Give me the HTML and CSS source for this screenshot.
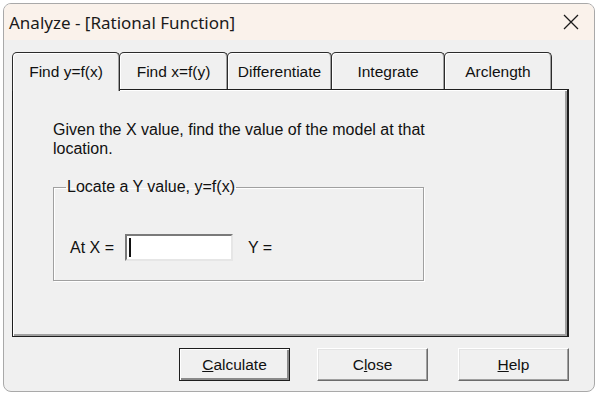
FILE: index.html
```html
<!DOCTYPE html>
<html lang="en">
  <head>
    <meta charset="UTF-8" />
    <title>Analyze - [Rational Function]</title>
    <link rel="stylesheet" href="styles.css">
  </head>
  <body>
    <div class="window">
      <div class="titlebar">
        <span class="title">Analyze - [Rational Function]</span>
        <svg class="close" width="16" height="16" viewBox="0 0 16 16">
          <path d="M1 1 L15 15 M15 1 L1 15" stroke="#1a1a1a" stroke-width="1.3" fill="none" />
        </svg>
      </div>

      <div class="content">
        <div class="tabs">
          <div class="tab active" style="width: 108px">Find y=f(x)</div>
          <div class="tab" style="width: 109px">Find x=f(y)</div>
          <div class="tab" style="width: 105px">Differentiate</div>
          <div class="tab" style="width: 114px">Integrate</div>
          <div class="tab" style="width: 108px">Arclength</div>
        </div>

        <div class="panel">
          <p class="desc">Given the X value, find the value of the model at that<br>location.</p>

          <fieldset class="group">
            <legend>Locate a Y value, y=f(x)</legend>
            <div class="row">
              <span class="label">At X =</span>
              <div class="input"><span class="caret"></span></div>
              <span class="label">Y =</span>
            </div>
          </fieldset>
        </div>

        <div class="buttons">
          <button class="btn default"><u>C</u>alculate</button>
          <button class="btn close-btn">C<u>l</u>ose</button>
          <button class="btn help-btn"><u>H</u>elp</button>
        </div>
      </div>
    </div>
  </body>
</html>
```

FILE: styles.css
```css
body{
  margin: 0;
  background: #ffffff;
  font-family: "Liberation Sans", Arial, sans-serif;
}
.window{
  margin: 3px 0 0 3px;
  width: 592px;
  height: 389px;
  box-sizing: border-box;
  border: 1px solid #a9a9a9;
  border-radius: 8px;
  background: #f0f0f0;
  overflow: hidden;
}
.titlebar{
  height: 36px;
  background: #faf2eb;
  display: flex;
  align-items: center;
  justify-content: space-between;
  padding: 0 15px 0 5px;
}
.title{
  font-family: "Noto Sans", sans-serif;
  font-size: 17px;
  color: #1a1a1a;
}
.close{
  display: block;
}
.content{
  padding: 12px 0 0 8px;
}
.tabs{
  display: flex;
  height: 37px;
}
.tab{
  box-sizing: border-box;
  height: 37px;
  margin-right: -1px;
  border: 1px solid #2b2b2b;
  border-bottom: none;
  border-radius: 5px 5px 0 0;
  box-shadow: inset 1px 1px #ffffff, inset -1px 0 #a0a0a0;
  background: #f0f0f0;
  font-size: 15.5px;
  color: #111;
  text-align: center;
  line-height: 37px;
}
.tab.active{
  position: relative;
  z-index: 1;
  height: 39px;
  margin-bottom: -2px;
}
.panel{
  box-sizing: border-box;
  width: 557px;
  height: 248px;
  border: 1px solid #1e1e1e;
  border-right: 2px solid #1e1e1e;
  box-shadow: inset 1px 1px #ffffff, inset -2px -2px #a0a0a0;
  padding: 30px 0 0 40px;
}
.desc{
  margin: 0;
  font-size: 16px;
  line-height: 19px;
  color: #111;
}
.group{
  margin: 20px 0 0 0;
  width: 371px;
  height: 103px;
  box-sizing: border-box;
  border: 1px solid #a0a0a0;
  box-shadow: 1px 1px #ffffff, inset 1px 1px #ffffff;
  padding: 0 0 0 16px;
}
.group legend{
  font-size: 16px;
  color: #111;
  padding: 0 1px;
  margin-left: -4px;
}
.row{
  display: flex;
  align-items: center;
  margin-top: 38px;
}
.label{
  font-size: 16px;
  color: #111;
}
.input{
  box-sizing: border-box;
  width: 108px;
  height: 27px;
  margin: 0 15px 0 11px;
  background: #ffffff;
  border-top: 2px solid #7a7a7a;
  border-left: 2px solid #7a7a7a;
  border-right: 2px solid #e6e6e6;
  border-bottom: 2px solid #e6e6e6;
  padding: 2px 0 0 2px;
}
.caret{
  display: block;
  width: 2px;
  height: 19px;
  background: #111;
}
.buttons{
  display: flex;
  margin: 11px 0 0 167px;
}
.btn{
  box-sizing: border-box;
  width: 111px;
  height: 33px;
  background: #f0f0f0;
  font-family: "Liberation Sans", Arial, sans-serif;
  font-size: 15.5px;
  color: #111;
  border: 1px solid;
  border-color: #ffffff #6b6b6b #6b6b6b #ffffff;
  box-shadow: inset -1px -1px #a0a0a0, inset 1px 1px #e3e3e3;
  padding: 0;
}
.btn.default{
  border: 1px solid #1e1e1e;
  box-shadow: inset 1px 1px #ffffff, inset -2px -2px #8a8a8a;
}
.close-btn{
  margin-left: 27px;
}
.help-btn{
  margin-left: 30px;
}
```
